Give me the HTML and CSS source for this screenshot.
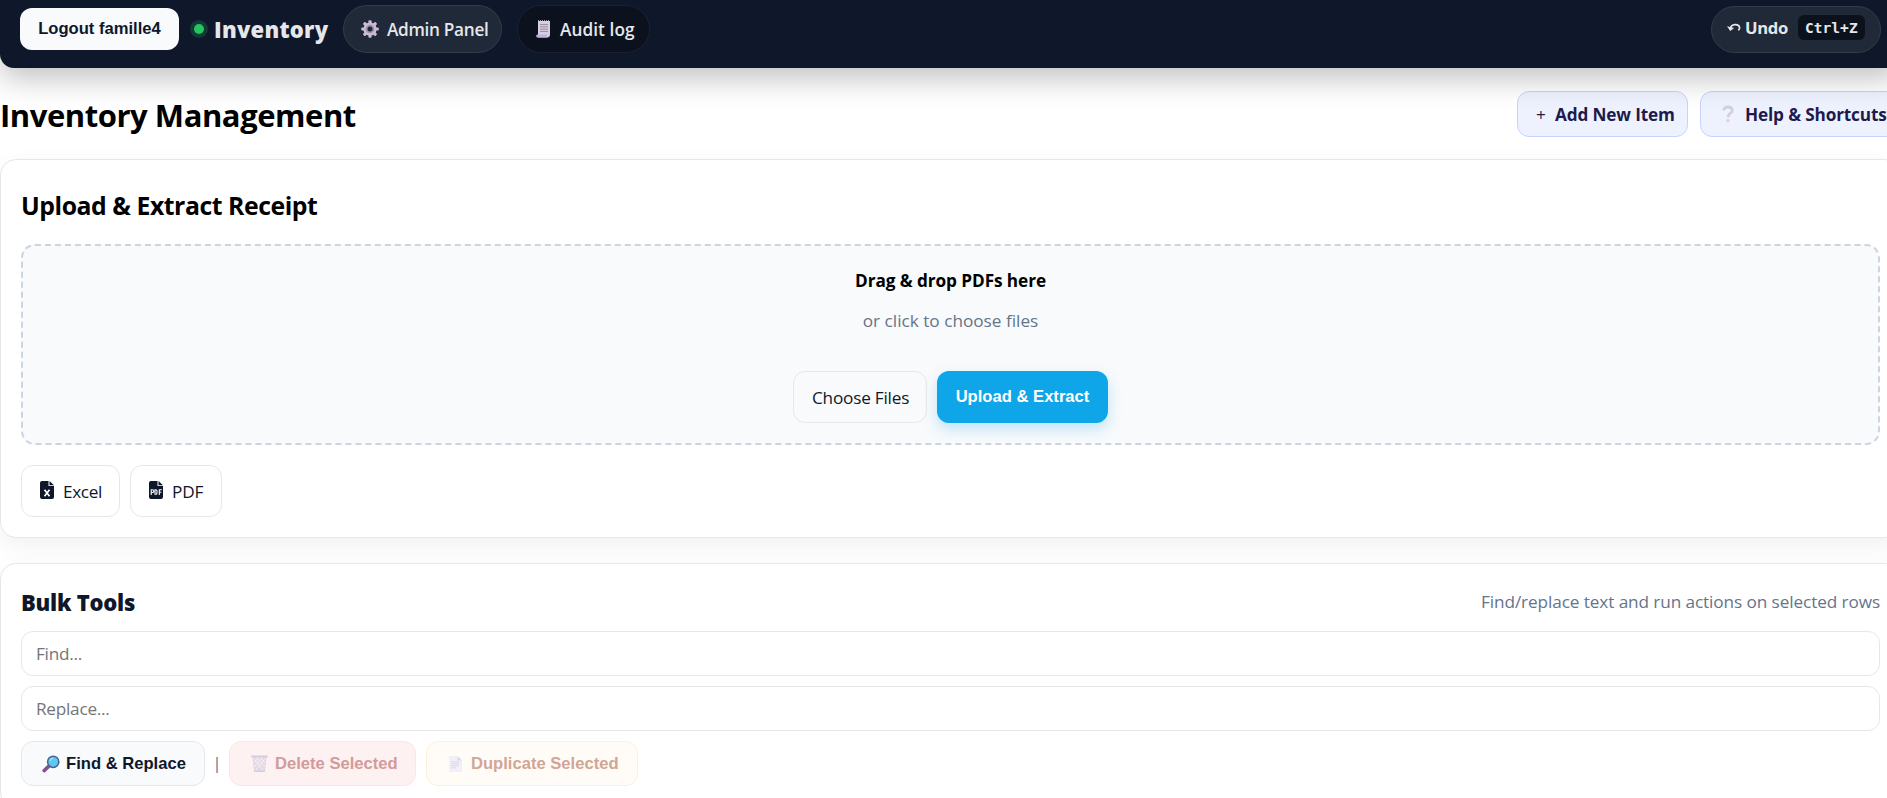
FILE: index.html
```
<!DOCTYPE html>
<html lang="en">
<head>
<meta charset="utf-8">
<title>Inventory Management</title>
<link rel="stylesheet" href="styles.css">
</head>
<body>
<div class="page">
  <header class="topbar">
    <button class="logout">Logout famille4</button>
    <span class="status-dot"></span>
    <span class="brand">Inventory</span>
    <a class="pill pill-admin">
      <svg class="ico-gear" viewBox="0 0 18 18"><g fill="#c9bcd6"><circle cx="9" cy="9" r="6.6"/><rect x="7.4" y="0.2" width="3.2" height="17.6" rx="1"/><rect x="7.4" y="0.2" width="3.2" height="17.6" rx="1" transform="rotate(45 9 9)"/><rect x="7.4" y="0.2" width="3.2" height="17.6" rx="1" transform="rotate(90 9 9)"/><rect x="7.4" y="0.2" width="3.2" height="17.6" rx="1" transform="rotate(135 9 9)"/></g><circle cx="9" cy="9" r="4.3" fill="#9f8fae"/><circle cx="9" cy="9" r="2.5" fill="#1f2937"/></svg>
      <span>Admin Panel</span>
    </a>
    <a class="pill pill-audit">
      <svg class="ico-log" viewBox="0 0 15 18"><path d="M2 1h12v13.5a3 3 0 0 1-3 3H2z" fill="#d6cfe0"/><path d="M2 .3h12" stroke="#a79db5" stroke-width="1.6" stroke-dasharray="1 1"/><path d="M4 4.5h8M4 6.800h8M4 9.100h8M4 11.400h8" stroke="#8d8499" stroke-width=".9"/><path d="M1.500 14.500h9.500v1.500a1.500 1.500 0 0 0 1.500 1.500H1.800A1.500 1.500 0 0 1 .2 16a1.500 1.500 0 0 1 1.300-1.500z" fill="#c5b2dc"/></svg>
      <span>Audit log</span>
    </a>
    <a class="pill pill-undo">
      <svg class="ico-undo" viewBox="0 0 15 9"><path d="M3.600 5C4.200 1 11.800.2 12.600 4.600c.1 1-.5 2-1.300 2.600" fill="none" stroke="#e5e7eb" stroke-width="1.700"/><path d="M0 3.300l7.200 1.600-4 3z" fill="#e5e7eb"/></svg>
      <span>Undo</span>
      <kbd class="kbd">Ctrl+Z</kbd>
    </a>
  </header>

  <div class="title-row">
    <h1 class="title">Inventory Management</h1>
    <div class="title-actions">
      <a class="action action-add"><span class="plus">+</span><span>Add New Item</span></a>
      <a class="action action-help">
        <svg class="ico-help" viewBox="0 0 12 18"><path d="M1.800 5.600C1.800 3.200 3.500 2 6 2s4.200 1.300 4.200 3.500C10.200 8.500 6 8 6 12.300" fill="none" stroke="#d5cde0" stroke-width="2.800"/><circle cx="6" cy="15.800" r="1.700" fill="#dccfe2"/></svg>
        <span>Help &amp; Shortcuts</span>
      </a>
    </div>
  </div>

  <section class="card upload">
    <h2 class="upload-title">Upload &amp; Extract Receipt</h2>
    <div class="dropzone">
      <div class="drop-main">Drag &amp; drop PDFs here</div>
      <div class="drop-sub">or click to choose files</div>
      <div class="drop-actions">
        <a class="outline choose">Choose Files</a>
        <button class="primary">Upload &amp; Extract</button>
      </div>
    </div>
    <div class="exports">
      <a class="outline excel">
        <svg class="ico-file" viewBox="0 0 14 18"><path fill="#0f172a" d="M2 0h6.500v5H14v11a2 2 0 0 1-2 2H2a2 2 0 0 1-2-2V2a2 2 0 0 1 2-2z"/><path fill="#0f172a" d="M9.500 0L14 4.200H9.500z"/><path d="M4.500 8.700l5 6.600M9.500 8.700l-5 6.600" stroke="#fff" stroke-width="1.700"/></svg>
        <span>Excel</span>
      </a>
      <a class="outline pdf">
        <svg class="ico-file" viewBox="0 0 14 18"><path fill="#0f172a" d="M2 0h6.500v5H14v11a2 2 0 0 1-2 2H2a2 2 0 0 1-2-2V2a2 2 0 0 1 2-2z"/><path fill="#0f172a" d="M9.500 0L14 4.200H9.500z"/><path d="M2.200 14V8.700h1.200a1.300 1.300 0 0 1 0 2.800H2.200M6 8.700v4.600h.7q1.300 0 1.300-1.300V10q0-1.300-1.300-1.300zM10.300 14V8.700h2.500M10.300 11.200h2" fill="none" stroke="#fff" stroke-width="1.100"/></svg>
        <span>PDF</span>
      </a>
    </div>
  </section>

  <section class="card bulk">
    <div class="bulk-head">
      <h3 class="bulk-title">Bulk Tools</h3>
      <span class="bulk-note">Find/replace text and run actions on selected rows</span>
    </div>
    <div class="field">Find...</div>
    <div class="field">Replace...</div>
    <div class="bulk-actions">
      <button class="btn btn-find">
        <svg class="ico-find" viewBox="0 0 18 18"><path d="M7.500 10.500L2.300 15.500" stroke="#84508f" stroke-width="3.800" stroke-linecap="round"/><circle cx="11.200" cy="6.800" r="5.600" fill="#5cc8ea" stroke="#4a5fa0" stroke-width="1.500"/><path d="M8 6a3.500 3.500 0 0 1 3-2.600" stroke="#a5e6f7" stroke-width="1.200" fill="none"/></svg>
        <span>Find &amp; Replace</span>
      </button>
      <span class="sep">|</span>
      <button class="btn btn-delete">
        <svg class="ico-trash" viewBox="0 0 17 17"><path d="M1.500 2.500h14L14 16.500H3z" fill="#e0d9e4"/><path d="M3 4l10 12M6 3l8 9M10 3l4 5M14 4L4 16M11 3l-8 9M7 3L3 8" stroke="#f8f1f5" stroke-width=".9"/><path d="M.3 1.500h16.400" stroke="#d3ccd8" stroke-width="2"/><path d="M3 16.200h11" stroke="#d0c9d6" stroke-width="1.200"/></svg>
        <span>Delete Selected</span>
      </button>
      <button class="btn btn-dup">
        <svg class="ico-doc" viewBox="0 0 13 16"><path d="M0 0h8.500L13 4.500V16H0z" fill="#f2eff9"/><path d="M8.500 0L13 4.500H8.500z" fill="#dcd7e6"/><path d="M2 5.800h8M2 7.800h8M2 9.800h8M2 11.800h5" stroke="#d6d1de" stroke-width=".8"/></svg>
        <span>Duplicate Selected</span>
      </button>
    </div>
  </section>
</div>
</body>
</html>
```
FILE: styles.css
```
* { box-sizing: border-box; }
html, body { margin: 0; height: 798px; overflow: hidden; background: #fff; }
body { font-family: "Open Sans", "Noto Sans", sans-serif; font-size: 17.2px; line-height: 24px; color: #0f172a; white-space: nowrap; }
button { font-family: "Liberation Sans", Arial, sans-serif; font-size: 16.6px; font-weight: 700; line-height: 18px; margin: 0; padding: 0; border: 0; }
h1, h2, h3 { margin: 0; }
svg { display: block; flex: none; }
.page { width: 1901px; }

.topbar { position: relative; display: flex; align-items: flex-start; height: 68px; padding: 5px 20px 0; background: #0f172a; border-radius: 0 0 14px 14px; box-shadow: 0 10px 30px rgba(0,0,0,.25); }
.logout { width: 159px; height: 42px; margin-top: 3px; border-radius: 12px; background: #f8fafc; color: #0f172a; padding-bottom: 1px; }
.status-dot { width: 10px; height: 10px; margin: 19px 11px 0 15px; border-radius: 50%; background: #22c55e; box-shadow: 0 0 0 4px rgba(34,197,94,.2); }
.brand { width: 129px; height: 48px; margin-left: -1px; line-height: 49px; font-size: 22px; font-weight: 800; letter-spacing: .25px; color: #e5e7eb; }
.pill { display: flex; align-items: center; height: 48px; border-radius: 24px; border: 1px solid #323c49; background: #1f2937; color: #e5e7eb; font-weight: 600; letter-spacing: -.3px; }
.pill span { padding-top: 2px; }
.pill-admin { width: 159px; padding-left: 17px; }
.pill-audit { width: 133px; margin-left: 15px; padding-left: 18px; background: #0b121e; border-color: #1a2230; letter-spacing: .08px; }
.pill-undo { width: 170px; height: 47px; margin: 1px 0 0 auto; padding: 0 0 4px 15px; font-size: 16.6px; font-weight: 700; }
.pill-undo span { width: 44px; padding-top: 0; }
.ico-gear { width: 18px; height: 18px; margin-right: 8px; }
.ico-log { width: 15px; height: 18px; margin-right: 9px; }
.ico-undo { width: 15px; height: 9px; margin-right: 3px; }
.kbd { width: 67px; height: 25px; margin-left: 9px; padding-left: 7px; border-radius: 6px; background: #0b121e; font: 700 14.5px/26px "DejaVu Sans Mono", monospace; letter-spacing: .05px; }

.title-row { display: flex; justify-content: space-between; height: 91px; }
.title { font-size: 31px; line-height: 95px; font-weight: 700; letter-spacing: -.45px; color: #000; }
.title-actions { display: flex; gap: 12px; padding-top: 23px; }
.action { display: flex; align-items: center; height: 46px; border: 1px solid #c7d2fe; border-radius: 12px; background: #eef2ff; color: #1e1b4b; font-weight: 700; letter-spacing: -.15px; }
.action span { padding-top: 1px; }
.action-add { width: 171px; padding-left: 17px; }
.action-help { width: 201px; padding-left: 21px; }
.action .plus { width: 20px; padding-left: 1px; font-weight: 400; }
.ico-help { width: 12px; height: 18px; margin-right: 11px; }

.card { border: 1px solid #e5e7eb; border-radius: 16px; background: #fff; box-shadow: 0 8px 24px rgba(0,0,0,.06); padding: 0 20px; }
.upload { height: 379px; }
.upload-title { height: 84px; line-height: 91px; font-size: 24.8px; font-weight: 700; letter-spacing: -.45px; color: #000; }
.dropzone { height: 201px; border: 2px dashed #cbd5e1; border-radius: 14px; background: #f8fafc; text-align: center; }
.drop-main { margin-top: 23px; font-weight: 700; letter-spacing: -.07px; color: #000; }
.drop-sub { margin-top: 16px; color: #64748b; }
.drop-actions { display: flex; justify-content: center; gap: 10px; margin-top: 38px; }
.outline { display: flex; align-items: center; height: 52px; padding-top: 1px; border: 1px solid #e5e7eb; border-radius: 12px; color: #0f172a; }
.choose { width: 134px; padding-left: 18px; letter-spacing: -.22px; }
.primary { width: 171px; height: 52px; padding-bottom: 1px; border-radius: 12px; background: #0ea5e9; color: #fff; box-shadow: 0 6px 14px rgba(14,165,233,.25); }
.exports { display: flex; gap: 10px; margin-top: 20px; }
.excel { width: 99px; padding-left: 18px; letter-spacing: -.36px; }
.pdf { width: 92px; padding-left: 18px; letter-spacing: -.1px; }
.ico-file { width: 14px; height: 18px; margin: -3px 9px 0 0; }

.bulk { height: 245px; margin-top: 25px; }
.bulk-head { display: flex; justify-content: space-between; height: 67px; }
.bulk-title { font-size: 22px; font-weight: 800; line-height: 76px; letter-spacing: -.24px; }
.bulk-note { color: #64748b; line-height: 75px; letter-spacing: -.097px; }
.field { height: 45px; margin-bottom: 10px; padding-left: 14px; line-height: 44px; border: 1px solid #e5e7eb; border-radius: 12px; color: #757575; letter-spacing: -.25px; }
.bulk-actions { display: flex; }
.btn { display: flex; align-items: center; height: 45px; padding: 0 0 0 20px; border: 1px solid #e5e7eb; border-radius: 12px; background: #f8fafc; color: #0f172a; }
.btn span { padding-top: 1px; }
.btn-find { width: 184px; }
.sep { width: 24px; text-align: center; line-height: 43px; color: #64748b; }
.btn-delete { width: 187px; padding-left: 21px; background: #fef1f1; border-color: #fee5e5; color: #d29b9b; }
.btn-dup { width: 212px; margin-left: 10px; padding-left: 22px; background: #fffcf7; border-color: #feeedd; color: #d2a595; }
.ico-find { width: 18px; height: 18px; margin-right: 6px; }
.ico-trash { width: 17px; height: 17px; margin-right: 7px; }
.ico-doc { width: 13px; height: 16px; margin-right: 9px; }
```
